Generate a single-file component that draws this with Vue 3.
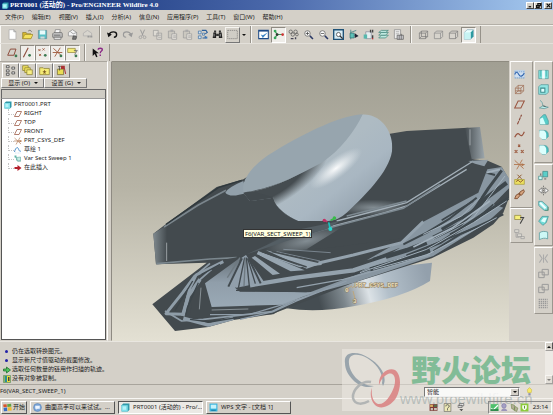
<script setup>
import { h, ref } from 'vue'

const cube = (s, f) =>
  `<path d="M2 6l3-3h9v8l-3 3H2z" fill="${f}" stroke="${s}"/><path d="M2 6h9v8M11 6l3-3" fill="none" stroke="${s}"/>`
const dot = (x, y) => `<circle cx="${x}" cy="${y}" r="2" fill="#3d7a52"/>`
const glass = (inner) =>
  `<circle cx="6.500" cy="6.500" r="4" fill="#fff" stroke="#555"/><path d="M10 10l4.500 4.500" stroke="#2c3a66" stroke-width="2.200"/>${inner}`

const icons = {
  new: '<path d="M3 1h7l3 3v11H3z" fill="#fff" stroke="#a9a9a9"/><path d="M10 1v3h3" fill="none" stroke="#888"/>',
  open: '<path d="M1 5h5l1 2h6v7H1z" fill="#d9b92e" stroke="#8a7a2a"/><path d="M1 14l3-6h12l-3 6z" fill="#f4e25e" stroke="#a08c2c"/><path d="M9 3c2-2 4-1 5 1" fill="none" stroke="#555"/>',
  save: '<path d="M2 2h12v12H2z" fill="#58bfc4" stroke="#5d8b94"/><path d="M4 2h8v6H4z" fill="#e8fbfb"/><path d="M5 11h6v3H5z" fill="#cfd9da"/>',
  print: '<path d="M4 6l1-5h7l-1 5" fill="#fff" stroke="#777"/><path d="M1 7l2-2h11l1 2v5H1z" fill="#bdbdbd" stroke="#666"/><path d="M3 12h10v3H3z" fill="#eee" stroke="#666"/><path d="M3 9h9" stroke="#555"/>',
  mail: '<path d="M2 5l6-4 6 4v5H2z" fill="#f4f4f4" stroke="#888"/><path d="M5 4l4 3 5-2" fill="none" stroke="#888"/><path d="M9 10l5 1-1 4H8z" fill="#777" stroke="#444"/>',
  link: '<path d="M2 6l6-4 6 4v4H2z" fill="#d8d5ce" stroke="#aaa"/><path d="M8 11h3m1 0h3" stroke="#999" stroke-width="2.500"/>',
  undo: '<path d="M3 8c2-5 11-5 11 0 0 3-2 4-4 4" fill="none" stroke="#111" stroke-width="2"/><path d="M0 5l2 7 5-4z" fill="#111"/>',
  redo: '<path d="M13 8C11 3 2 3 2 8c0 3 2 4 4 4" fill="none" stroke="#999" stroke-width="1.600"/><path d="M16 5l-2 7-5-4z" fill="#999"/>',
  cut: '<path d="M5 1l4 9M11 1L7 10" stroke="#999" stroke-width="1.400"/><g fill="none" stroke="#999"><circle cx="5" cy="12" r="2"/><circle cx="11" cy="12" r="2"/></g>',
  copy: '<path d="M2 2h7v8H2zM7 6h7v9H7z" fill="#dedbd4" stroke="#999"/><path d="M9 9h4M9 12h4" stroke="#999"/>',
  paste: '<path d="M2 3h9v10H2z" fill="#cbc8c0" stroke="#999"/><path d="M5 1h4v3H5z" fill="#aaa"/><path d="M7 7h7v8H7z" fill="#e4e1da" stroke="#999"/><path d="M9 10h4M9 12h4" stroke="#999"/>',
  regen: '<path d="M2 3h4v4H2zM2 10h4v4H2zM8 6h3v3H8z" fill="#cfe3f5" stroke="#3d6c9e"/><path d="M7 2h6l2 3-3 2M8 13h4v-3" fill="none" stroke="#2b5f9b" stroke-width="1.500"/><path d="M12 11h3v3h-3z" fill="#3d79b8"/>',
  find: '<path d="M2 5h4v8H1zM10 5h4l1 8h-5z" fill="#222"/><path d="M3 2h3v3H3zM10 2h3v3h-3zM6 7h4v3H6z" fill="#333"/><path d="M3 7v4M12 7v4" stroke="#ccc"/>',
  box: '<path d="M1 2h14v12H1z" fill="#d0cdc6" stroke="#777" stroke-dasharray="2 1"/>',
  repaint: '<path d="M1 2h14v12H1z" fill="#fff" stroke="#1d4a86" stroke-width="1.500"/><path d="M1 3h14" stroke="#1d4a86" stroke-width="1.500"/><path d="M4 8l3 5 7-8-7 4z" fill="#3e86c6"/>',
  spin: '<path d="M3 3l3 5-3 5M6 8h8" fill="none" stroke="#3aa05a" stroke-width="1.800"/><circle cx="3" cy="3" r="2" fill="#38a75b"/><circle cx="3" cy="13" r="2" fill="#38a75b"/><circle cx="6" cy="8" r="2" fill="#333"/><circle cx="14" cy="8" r="2" fill="#c33"/>',
  orient: '<g fill="none" stroke="#555"><circle cx="4" cy="4" r="2.500"/><circle cx="11" cy="4" r="2.500"/><circle cx="7" cy="8" r="2.500"/><circle cx="13" cy="8" r="2"/></g><path d="M4 13h4v2H4zM10 12h2v3h-2z" fill="#445"/>',
  zoomin: glass('<path d="M4 6.500h5M6.500 4v5" stroke="#333"/>'),
  zoomout: glass('<path d="M4 6.500h5" stroke="#333"/>'),
  refit: '<path d="M1 1h14v14H1z" fill="#d9eef6" stroke="#1f5277" stroke-width="2"/><circle cx="8" cy="8" r="3" fill="#fff" stroke="#333"/><path d="M10 10l4 4" stroke="#333" stroke-width="2"/>',
  reorient: '<path d="M4 1v14M4 8l11 2M4 5l8-3" stroke="#2b7b7b" fill="none"/><path d="M3 6h6v7H3z" fill="#5cc2b8" stroke="#2f6f70"/><path d="M10 6l5 4-5 3z" fill="#223"/>',
  views: '<path d="M4 4h8v10H4z" fill="#e5eef0" stroke="#889"/><path d="M1 8h5v6H1z" fill="#57b8ad"/><path d="M10 1h2v4h-2zM13 1h2v4h-2zM13 9h2v4h-2z" fill="#444"/><path d="M13 13h2v2h-2z" fill="#b33"/>',
  layers: '<g fill="#bfe8df" stroke="#3b8176"><path d="M1 13l4-4h10l-4 4z"/><path d="M1 9l4-4h10l-4 4z"/><path d="M1 5l4-3h10l-4 3z"/></g>',
  manager: '<path d="M2 1h9v13H2z" fill="#eee" stroke="#888"/><path d="M4 4h5M4 7h5" stroke="#999"/><path d="M6 9h9v6H6z" fill="#cfcfd4" stroke="#555"/><path d="M9 9v6M12 7v8" stroke="#555"/>',
  wire: cube('#777', 'none') + '<path d="M5 3v8h9M5 11l-3 3" fill="none" stroke="#777"/>',
  hidden: cube('#888', '#d6d3cc'),
  nohidden: cube('#777', '#d8d5ce'),
  shaded: '<path d="M2 5l4-4h9v10l-4 4H2z" fill="#e9ffff" stroke="#8ab"/><path d="M11 5l4-4v10l-4 4z" fill="#2d9aa0"/><path d="M2 5h9v10H2z" fill="#c7f3f3"/>',
  dplane: '<path d="M1 12L5 3h8l-3 9z" fill="none" stroke="#8b4a3a" stroke-width="1.400"/>' + dot(13, 13),
  daxis: '<path d="M2 15L9 1" stroke="#8b4a3a" stroke-width="1.600"/>' + dot(11, 12),
  dpoint: '<path d="M2 3l3 3m0-3L2 6M8 2l3 3m0-3L8 5M3 10l3 3m0-3l-3 3" stroke="#a0593d" stroke-width="1.300"/>' + dot(12, 12),
  dcsys: '<path d="M2 2l11 10M12 1L4 14M1 8h14" stroke="#a05a3c" stroke-width="1.300"/>' + dot(13, 13),
  dnote: '<path d="M1 2h11v6H1z" fill="#f5ec7a" stroke="#8d8236"/><path d="M10 5h5l-4 6" fill="none" stroke="#555"/>' + dot(13, 13),
  help: '<path d="M1 2v11l3-3 2 5 2-1-2-5h4z" fill="#111"/><path d="M9 4c0-3 6-3 6 0 0 2-3 2-3 5M12 11v2" fill="none" stroke="#8b2a86" stroke-width="2"/>',
  tree: '<g fill="#eee" stroke="#333"><path d="M2 1h4v3H2zM2 7h4v3H2zM2 12h4v3H2zM10 3h4v3h-4zM10 10h4v3h-4z"/></g>',
  folders: '<path d="M1 1h8v7H1z" fill="#f3e562" stroke="#85792c"/><path d="M4 4h8v7H4z" fill="#f3e562" stroke="#85792c"/><path d="M7 7h8v7H7z" fill="#f7ee84" stroke="#85792c"/>',
  favs: '<path d="M1 4h5l1 1h8v9H1z" fill="#f4ea76" stroke="#85792c"/><path d="M8 7l1 2h2l-2 2 1 2-2-1-2 1 1-2-2-2h2z" fill="#7d5c22"/>',
  conn: '<path d="M2 6h9v8H2z" fill="#e9dc55" stroke="#6b622b"/><path d="M8 2h4v3H8zM12 4l2 9" fill="#a33" stroke="#a33" stroke-width="1.500"/><path d="M3 2h4M5 2v6" stroke="#333"/>',
  part: '<path d="M1 4l3-3h11v11l-3 3H1z" fill="#2f98a8"/><path d="M1 4h11v11H1z" fill="#7fe0ea"/><path d="M3 6h6v6H3z" fill="#b4f3f8"/>',
  plane: '<path d="M1 13L6 3h9l-5 10z" fill="none" stroke="#9a5540" stroke-width="1.500"/>',
  csys: '<path d="M1 2l13 12M12 1L4 15M0 8h15" stroke="#b0764f" stroke-width="1.300"/><path d="M11 6l5 2-5 3z" fill="#b0764f"/>',
  sketch: '<path d="M1 12c1-6 5-11 7-8s2 8 6 6" fill="none" stroke="#3d86c6" stroke-width="1.800"/><path d="M2 14h11" stroke="#a8cbe6" stroke-dasharray="2 1"/>',
  sweep: '<path d="M2 3c4 0 2 8 5 9h7" fill="none" stroke="#3f9a8b" stroke-width="1.500"/><path d="M5 5l8-1v7l-6 1z" fill="#c5ece4" stroke="#4e9c93"/><path d="M1 1h4v4H1z" fill="#61b5a8"/>',
  insert: '<path d="M1 6h6V2l8 6-8 6v-4H1z" fill="#b3202c"/>',
  hatch: '<path d="M1 2h14v11H1z" fill="#cfdff0" stroke="#b2cbe4"/><path d="M1 8c2-5 4-4 6 0s5 3 8-2" fill="none" stroke="#2f63ad" stroke-width="1.600"/><path d="M1 4h14M1 13h14" stroke="#5f8fc8" stroke-dasharray="2 1"/>',
  wirebox: '<path d="M2 6l4-4h8v8l-4 4H2zM2 6h8v8M10 6l4-4M6 2v8h8M6 10l-4 4M2 10h8" fill="none" stroke="#9c6b50"/>',
  axis: '<path d="M5 15L11 1" stroke="#8b4a3a" stroke-width="1.600" stroke-dasharray="5 1"/>',
  curve: '<path d="M1 12c4-8 6-5 8-3s4 0 6-5" fill="none" stroke="#98543f" stroke-width="1.700"/>',
  points: '<path d="M6 1l3 3m0-3L6 4M1 9l4 4m0-4l-4 4M10 9l4 4m0-4l-4 4" stroke="#9c5a3e" stroke-width="1.600"/>',
  analysis: '<path d="M1 8h14v7H1z" fill="#ece061" stroke="#a39738"/><path d="M5 1l6 6m0-6L5 7M3 11l3-2 3 3 4-3" fill="none" stroke="#8f5a2d" stroke-width="1.400"/>',
  ref: '<path d="M1 14l2-5 5-3 1 3-4 5zM7 8l2-4 5-3 1 3-4 5z" fill="#d4a37e" stroke="#7d4c30" stroke-width="1.300"/>',
  anno: '<path d="M1 2h9v6H1z" fill="#f6ef7b" stroke="#8d8236"/><path d="M9 5h5l-5 9" fill="none" stroke="#444" stroke-width="1.500"/>',
  annos: '<path d="M1 1h6v4H1zM5 7h6v4H5zM10 11h5v3h-5z" fill="#dcd9d2" stroke="#999"/><path d="M3 5v7h5" fill="none" stroke="#999"/>',
  hole: '<path d="M1 2h14v12H1z" fill="#7fe0dc" stroke="#5d9c9e"/><path d="M6 2h4v12H6z" fill="#effdfd"/><path d="M4 2v9M12 2v9" stroke="#3aa3a3"/>',
  shell: '<path d="M1 4l3-3h11v11l-3 3H1z" fill="#92e5e2" stroke="#4f9294"/><path d="M4 6h6v6H4z" fill="#e3ffff" stroke="#3c8b8c" stroke-width="1.500"/>',
  rib: '<path d="M3 2c2 1 4 4 4 8l-5 3 7 1 6-2-7-2" fill="#b9efec" stroke="#5c8f91"/><path d="M7 10l4 1" stroke="#333"/>',
  draft: '<path d="M3 15V6l5-5h3l4 9v5z" fill="#57cdc9" stroke="#4a9698"/><path d="M3 7l4-2 4 10H3z" fill="#d6fffc"/>',
  round: '<path d="M2 2h7c4 0 6 3 6 6v3l-4 4H6z" fill="#45bcbc" stroke="#5aa1a3"/><path d="M2 2h6c3 1 4 4 4 6v7H6L2 11z" fill="#dcfffd"/>',
  mirrorbox: '<path d="M7 2h7v8H7z" fill="#5bcfc9" stroke="#3d8485"/><path d="M1 9h5v5H1z" fill="#d3fffb" stroke="#3d8485"/><path d="M4 5v3M9 13h3" stroke="#333"/>',
  mirror: '<path d="M8 1v14" stroke="#555" stroke-dasharray="2 1"/><path d="M6 4v8L1 8zM10 4v8l5-4z" fill="#fff" stroke="#555"/>',
  extrude: '<path d="M1 2h5l8 7v6H9L1 8z" fill="#8de4e2" stroke="#448d90"/><path d="M3 4l8 8" stroke="#eff" stroke-width="3"/><path d="M10 15h5v-5" fill="none" stroke="#486"/>',
  blend: '<path d="M1 9l5-7h9l-3 9-5 4z" fill="#6fdad6" stroke="#3e8f91"/><path d="M4 9l4-5h5l-3 7z" fill="#e2fffd"/>',
  bound: '<path d="M2 4c5-3 8-2 12-1v10c-4-2-8-1-12 1z" fill="#cdf8f5" stroke="#4b9294"/>',
  gtrim: '<path d="M2 2l4 6-4 6M14 2l-4 6 4 6M8 2v12" fill="none" stroke="#aaa" stroke-width="1.500"/>',
  gmerge: '<path d="M1 6h8v8H1zM6 2h9v8H6z" fill="none" stroke="#999" stroke-width="1.400"/>',
  gpattern: '<path d="M1 2h13M1 5h13M1 8h13M1 11h13M1 14h13" stroke="#999" stroke-width="2" stroke-dasharray="2 1"/>',
  win: '<g transform="rotate(-6 8 8)"><path d="M1 2h6v5H1z" fill="#d9532b"/><path d="M8 2h7v5H8z" fill="#63a33d"/><path d="M1 8h6v6H1z" fill="#3a6dc4"/><path d="M8 8h7v6H8z" fill="#eebb33"/></g>',
  chat: '<circle cx="8" cy="8" r="7" fill="#7ba6d9" stroke="#557eb3"/><path d="M4 5h8v5H8l-2 2v-2H4z" fill="#eef6ff"/>',
  wps: '<path d="M1 1h14v14H1z" fill="#38b4dc"/><path d="M3 3h10v7H3z" fill="#c6f2fb"/><path d="M4 13h8" stroke="#187fa8" stroke-width="2"/>',
  bulb: '<path d="M8 1l4 4-1 5H5L4 5z" fill="#f7ea66" stroke="#c9b845"/><path d="M6 11h4v4H6z" fill="#8f90a8"/>',
  ime: '<path d="M1 2h14v12H1z" fill="#7d3b36"/><path d="M2 3h5v4H2z" fill="#d8b060"/><path d="M9 3h5v4H9z" fill="#56734a"/><path d="M3 9h4v4H3zM9 9h5v4H9z" fill="#c8c1b5"/>',
  qmark: '<path d="M2 1h12v14H2z" fill="#eeeab7" stroke="#555"/><path d="M5 6c0-4 6-4 6 0 0 2-3 2-3 4M8 11v2" fill="none" stroke="#444" stroke-width="1.500"/>',
  restore: '<path d="M4 1h8v4H4zM2 4h7v4H2z" fill="#eee" stroke="#444"/><path d="M4 11h7l-3 3z" fill="#333"/>',
  usb: '<path d="M1 2h14v12H1z" fill="#4fc06c"/><path d="M2 10l4 2 8-8" fill="none" stroke="#fff" stroke-width="2"/><path d="M1 11h14v3H1z" fill="#278346"/>',
  user: '<circle cx="7" cy="5" r="4" fill="#a5a0c5" stroke="#7771a0"/><path d="M2 14c1-6 9-6 11 0z" fill="#9b95ba"/>',
  sound: '<path d="M2 2l6 2v8l-5-2zM9 6l5 3-2 6-5-2z" fill="#b3ad96" stroke="#6b8745"/>',
  shield: '<path d="M1 1h14v14H1z" fill="#8ccb3b"/><path d="M4 4h8v4c0 3-2 4-4 5-2-1-4-2-4-5z" fill="#fff"/><path d="M8 5v5" stroke="#5b9b27" stroke-width="2"/>',
  go: '<path d="M1 6h6V2l8 6-8 6v-4H1z" fill="#4fc35e" stroke="#1d6d2c" stroke-width="1.500"/>',
  door: '<path d="M1 1h14v14H1z" fill="#e8dc3a" stroke="#23705a"/><path d="M3 2h5v12H3z" fill="#2a8f95"/><path d="M10 4h3v8h-3z" fill="#444"/>'
}

const Icon = (props) =>
  h('svg', { viewBox: '0 0 16 16', class: 'ic', 'aria-hidden': 'true', innerHTML: icons[props.name] })
Icon.props = ['name']

const menus = ['文件(F)', '编辑(E)', '视图(V)', '插入(I)', '分析(A)', '信息(N)', '应用程序(P)', '工具(T)', '窗口(W)', '帮助(H)']

const topBars = [
  ['new', 'open', 'save', 'print', 'mail', 'link'],
  ['undo', 'redo', 'cut', 'copy', 'paste', 'paste', 'regen', 'find', 'box'],
  ['repaint', 'spin', 'orient', 'zoomin', 'zoomout', 'refit', 'reorient', 'views', 'layers', 'manager'],
  ['wire', 'hidden', 'nohidden', 'shaded']
]
const pressed = new Set(['spin', 'shaded', 'daxis', 'dpoint', 'dcsys', 'dnote'])
const datumBar = ['dplane', 'daxis', 'dpoint', 'dcsys', 'dnote']
const tabs = ['tree', 'folders', 'favs', 'conn']
const activeTab = ref('tree')

const features = [
  { icon: 'plane', label: 'RIGHT' },
  { icon: 'plane', label: 'TOP' },
  { icon: 'plane', label: 'FRONT' },
  { icon: 'csys', label: 'PRT_CSYS_DEF' },
  { icon: 'sketch', label: '草绘 1' },
  { icon: 'sweep', label: 'Var Sect Sweep 1' },
  { icon: 'insert', label: '在此插入' }
]

const datumTools = [
  ['hatch', 'wirebox', 'plane', 'axis', 'curve', 'points', 'csys', 'analysis', 'ref'],
  ['anno', 'annos']
]
const shapeTools = [
  ['hole', 'shell', 'rib', 'draft', 'round', 'round'],
  ['mirrorbox', 'mirror', 'extrude', 'blend', 'bound'],
  ['gtrim', 'gmerge', 'gmerge', 'gpattern']
]

const messages = [
  { text: '仍在选取转换图元。' },
  { text: '显示新尺寸值驱动的截面修改。' },
  { icon: 'go', text: '选取任何数量的链用作扫描的轨迹。' },
  { icon: 'door', text: '没有对象被复制。' }
]

const tasks = [
  { icon: 'chat', label: '曲面高手可以来试试。...' },
  { icon: 'part', label: 'PRT0001 (活动的) - Pro/...', active: true },
  { icon: 'wps', label: 'WPS 文字 - [文档 1]' }
]
const filter = ref('智能')
</script>

<template>
  <div class="app">
    <header class="title">
      <Icon name="part" />
      <h1>PRT0001 (活动的) - Pro/ENGINEER Wildfire 4.0</h1>
      <div class="winbtns">
        <button aria-label="最小化"><svg viewBox="0 0 8 8"><path d="M1 6h4" /></svg></button>
        <button aria-label="还原"><svg viewBox="0 0 8 8"><path d="M3 1h4v3H3zM1 4h4v3H1z" /></svg></button>
        <button class="close" aria-label="关闭"><svg viewBox="0 0 8 8"><path d="M1 1l6 6M7 1L1 7" /></svg></button>
      </div>
    </header>

    <nav class="menu">
      <button v-for="m in menus" :key="m">{{ m }}</button>
    </nav>

    <div class="bar">
      <div v-for="(group, g) in topBars" :key="g" class="group">
        <button v-for="(name, i) in group" :key="i" class="tool" :class="{ on: pressed.has(name), raised: name === 'box' }" :aria-label="name">
          <Icon :name="name" />
        </button>
        <span v-if="g === 1" class="caret"></span>
      </div>
    </div>
    <div class="bar second">
      <div class="group">
        <button v-for="name in datumBar" :key="name" class="tool" :class="{ on: pressed.has(name) }" :aria-label="name">
          <Icon :name="name" />
        </button>
      </div>
      <div class="group">
        <button class="tool" aria-label="help"><Icon name="help" /></button>
      </div>
    </div>

    <main class="main">
      <aside class="panel">
        <div class="tabs">
          <button v-for="t in tabs" :key="t" :class="{ active: t === activeTab }" :aria-label="t" @click="activeTab = t">
            <Icon :name="t" />
          </button>
        </div>
        <div class="dropdowns">
          <button>显示 (O)<span class="caret"></span></button>
          <button>设置 (G)<span class="caret"></span></button>
        </div>
        <div class="treehead"></div>
        <ul class="tree">
          <li class="root"><Icon name="part" />PRT0001.PRT</li>
          <li v-for="f in features" :key="f.label"><Icon :name="f.icon" />{{ f.label }}</li>
        </ul>
      </aside>
      <div class="sash"></div>

      <section class="canvas">
        <svg class="model" viewBox="112 61 397 279">
          <defs>
            <linearGradient id="rim" gradientUnits="userSpaceOnUse" x1="520" y1="200" x2="640" y2="350">
              <stop offset="0" stop-color="#aebbc3" />
              <stop offset=".5" stop-color="#a9b7c2" />
              <stop offset="1" stop-color="#95a3af" />
            </linearGradient>
            <radialGradient id="shade" gradientUnits="userSpaceOnUse" cx="0" cy="0" r="1" gradientTransform="translate(385 235) rotate(-30) scale(205 82)">
              <stop offset="0" stop-color="#454c50" />
              <stop offset=".62" stop-color="#454c50" />
              <stop offset="1" stop-color="#454c50" stop-opacity="0" />
            </radialGradient>
            <radialGradient id="glow" gradientUnits="userSpaceOnUse" cx="0" cy="0" r="1" gradientTransform="translate(588 202) rotate(-37) scale(95 30)">
              <stop offset="0" stop-color="#fff" stop-opacity=".95" />
              <stop offset=".45" stop-color="#eef2f4" stop-opacity=".6" />
              <stop offset="1" stop-color="#dfe6ea" stop-opacity="0" />
            </radialGradient>
            <linearGradient id="foot" gradientUnits="userSpaceOnUse" x1="540" y1="610" x2="860" y2="520">
              <stop offset="0" stop-color="#454d52" />
              <stop offset=".22" stop-color="#7d878d" />
              <stop offset=".45" stop-color="#dce2e6" />
              <stop offset=".62" stop-color="#b3c0ca" />
              <stop offset="1" stop-color="#93a0ac" />
            </linearGradient>
            <linearGradient id="tipR">
              <stop offset="0" stop-color="#454c50" />
              <stop offset="1" stop-color="#9ca6ac" />
            </linearGradient>
            <linearGradient id="tipL">
              <stop offset="0" stop-color="#7f898e" />
              <stop offset="1" stop-color="#454c50" />
            </linearGradient>
            <linearGradient id="fan" x1="0" y1="0" x2="0" y2="1">
              <stop offset="0" stop-color="#667178" />
              <stop offset=".5" stop-color="#909eaa" />
              <stop offset="1" stop-color="#9aa9b5" />
            </linearGradient>
            <radialGradient id="mist">
              <stop offset="0" stop-color="#838d93" />
              <stop offset="1" stop-color="#838d93" stop-opacity="0" />
            </radialGradient>
            <clipPath id="disc">
              <path d="M310 275C400 270 580 190 668 40 720 40 757 85 757 140 755 200 690 270 620 335Q595 358 565 360L475 360C440 345 405 320 400 290L330 300z" />
            </clipPath>
          </defs>

          <g transform="translate(140 100) scale(.33333)">
            <path fill="url(#foot)" d="M440 622Q530 636 640 616 790 590 870 540L876 485 700 505 500 590z" />
            <path fill="#434a4e" d="M40 398L70 375 230 258 310 235 400 180 750 98 800 90 985 80 1000 175 1045 180 1085 197 1107 235V290L1090 335 1060 370 1000 410 875 472 640 545 395 640 280 657 205 678 105 690 37 610 200 485 48 490z" />

            <path fill="url(#tipL)" d="M40 398L80 372V488L48 490z" />
            <path fill="url(#tipR)" d="M975 81L1020 78 1034 172 995 175z" />
            <path d="M80 425v55M990 85v48" stroke="#c6cbce" stroke-width="2" />
            <path fill="none" stroke="#7b868d" stroke-width="5" d="M72 378L175 312 258 268" />
            <path fill="none" stroke="#30393d" stroke-width="4" d="M78 370L235 260 305 238" />
            <path fill="#92a0aa" d="M256 275Q262 260 310 240L320 275Q270 292 256 275z" />
            <path fill="none" stroke="#7b878e" stroke-width="5" d="M50 488L210 474 290 470" />

            <ellipse cx="700" cy="320" rx="110" ry="24" fill="url(#mist)" />
            <ellipse cx="500" cy="420" rx="130" ry="38" fill="url(#mist)" transform="rotate(-12 500 420)" />
            <path fill="#434a4e" d="M500 445L620 370 780 325 1000 185 1040 190 1055 245 880 340 780 420 600 465z" />
            <path fill="none" stroke="#a3afb8" stroke-width="4" d="M590 360L800 305 1000 180M560 380L735 335 800 315 980 205" />
            <path fill="none" stroke="#7d8991" stroke-width="5" d="M480 405L600 372 790 322 900 250M620 345L800 300" />
            <path fill="#8f9ca6" d="M985 180l60-4-12 20-28-8z" />
            <path fill="#545e64" d="M320 460L480 385 600 360 560 385 440 420z" />

            <path fill="#8896a1" d="M1042 205L1085 198 1107 232V262L1060 310 1090 320 1040 365 880 465 640 545 440 600 640 525 780 440 690 475 560 500 790 420 850 362 1015 275z" />
            <g fill="none" stroke="#3e474c" stroke-linejoin="round">
              <path stroke-width="13" d="M1100 245L1040 290 960 370 880 410" />
              <path stroke-width="9" d="M1085 208L1045 262 1000 330 905 385M1105 292L1020 345 900 425 800 465" />
              <path stroke-width="6" d="M1010 290L930 352 860 395 790 430M1065 222L1040 215M1090 340L960 400 880 450" />
              <path stroke-width="14" d="M700 478L800 448 860 425M690 505L780 480 870 448" />
              <path stroke-width="5" d="M1020 375L905 420 780 475 640 522M1060 310L1000 362 930 400M1000 300L905 358" />
            </g>
            <g fill="none" stroke="#a3b1bc" stroke-linejoin="round">
              <path stroke-width="3" d="M1095 225L1050 285 1000 350 880 415M1020 290L965 345 850 400M1100 300L1000 365 860 445 660 515M1070 350L940 420 860 462 700 505" />
              <path stroke-width="5" d="M1040 215L1080 205M1050 300L935 382 820 438" />
            </g>

            <path fill="#434a4e" d="M330 460L570 440 800 410 640 500 380 545z" />
            <g fill="none" stroke="#94a2ad" stroke-linejoin="round">
              <path stroke-width="9" d="M500 494L640 462 785 425 850 362" />
              <path stroke-width="13" d="M330 553L470 530 640 508 740 475" />
              <path stroke-width="4" d="M470 560L610 535 740 500 870 462M360 455L480 497 545 490" />
              <path stroke-width="2" d="M430 445L572 455M410 452L540 480" />
            </g>
            <path fill="#97a5b0" d="M345 465L420 518 398 522 335 470zM355 450L494 508 452 511 350 460zM378 448L548 487 500 503z" />
            <path fill="none" stroke="#434a4e" stroke-width="4" d="M365 452L500 498M352 462L440 512M395 452L535 484" />

            <path fill="#434a4e" d="M205 485L310 465 270 570 500 580 400 640 205 650 150 650 160 560z" />
            <path fill="url(#fan)" d="M195 547L300 470 285 560 300 572 520 574 430 611 215 618z" />
            <path fill="#919fab" d="M318 462L375 547 345 549 290 560 262 555 305 470z" />
            <g fill="none" stroke="#424a4f">
              <path stroke-width="6" d="M306 472L265 557M326 472L362 547" />
              <path stroke-width="4" d="M314 470L295 562M319 470L328 556M323 472L346 548M288 568L500 572" />
            </g>
            <path fill="none" stroke="#6f7a81" stroke-width="4" d="M300 470L262 530M316 470L312 556" />

            <g fill="none" stroke="#8f9da8" stroke-linejoin="round">
              <path stroke-width="9" d="M165 525L128 575 78 638 130 640 150 560 168 522 250 482" />
              <path stroke-width="11" d="M180 535L145 585 128 645M130 652L205 672 280 652" />
              <path stroke-width="5" d="M210 487L165 525M75 630L125 660 190 655 395 632 460 600M215 505L175 540" />
            </g>
            <g fill="none" stroke="#3c454a" stroke-width="4">
              <path d="M158 540L105 628M175 545L142 620 138 640M185 520L240 490M150 655L210 663 290 650" />
            </g>
            <path d="M183 560l-5 65M215 627l110-3" stroke="#a9b3b9" stroke-width="2" />
            <path fill="none" stroke="#909eaa" stroke-width="4" d="M210 641L330 640 430 610 530 575M300 655L400 632 470 600 620 540" />

            <g clip-path="url(#disc)">
              <path fill="url(#rim)" d="M300 30h470v340H300z" />
              <path fill="url(#shade)" d="M300 30h470v340H300z" />
              <path fill="url(#glow)" d="M300 30h470v340H300z" />
              <path fill="#434a4e" d="M300 260L398 288Q404 325 475 362L300 370z" />
            </g>
            <path fill="#97a5ae" d="M311 274C300 235 345 185 400 153 470 110 590 45 668 40 645 90 600 150 545 185 470 225 400 262 311 274z" />

            <g fill="none" stroke-width="5">
              <path stroke="#c13366" d="M550 356l12 6" />
              <path stroke="#38bb49" d="M572 358l16-8" />
              <path stroke="#18c4bf" d="M566 364l5 20" />
            </g>
            <circle cx="571" cy="384" r="6" fill="#24d6ce" />
            <circle cx="553" cy="358" r="5" fill="#c13366" />
            <circle cx="583" cy="351" r="5" fill="#38bb49" />
          </g>

          <g class="csys">
            <path d="M347 288l5-3M353 290l2 8M352 287l5-4" />
            <text x="345" y="291">0</text>
            <text x="353" y="302">3</text>
            <text x="355" y="286">PRT_CSYS_DEF</text>
          </g>
          <g class="tip">
            <rect x="243.500" y="228.500" width="68" height="8" />
            <text x="245" y="235">F6(VAR_SECT_SWEEP_1)</text>
          </g>
        </svg>
      </section>

      <div class="side">
        <div v-for="(g, i) in datumTools" :key="i" class="stack">
          <button v-for="(n, j) in g" :key="j" class="tool" :aria-label="n"><Icon :name="n" /></button>
        </div>
      </div>
      <div class="side narrow">
        <div v-for="(g, i) in shapeTools" :key="i" class="stack">
          <button v-for="(n, j) in g" :key="j" class="tool" :aria-label="n"><Icon :name="n" /></button>
        </div>
      </div>
    </main>

    <footer class="foot">
      <div class="messages">
        <ul>
          <li v-for="m in messages" :key="m.text">
            <Icon v-if="m.icon" :name="m.icon" /><span v-else class="bullet"></span>{{ m.text }}
          </li>
        </ul>
        <div class="scroll">
          <button aria-label="向上"><span class="caret up"></span></button>
          <button aria-label="向下"><span class="caret"></span></button>
        </div>
      </div>

      <div class="status">
        <span class="hint">F6(VAR_SECT_SWEEP_1)</span>
        <div class="filter">
          <select v-model="filter" aria-label="过滤器"><option>智能</option></select>
          <span class="arrow"><span class="caret"></span></span>
        </div>
        <Icon name="bulb" />
      </div>

      <div class="taskbar">
        <button class="start"><Icon name="win" />开始</button>
        <button v-for="t in tasks" :key="t.label" class="task" :class="{ active: t.active }">
          <Icon :name="t.icon" /><span>{{ t.label }}</span>
        </button>
        <div class="lang"><Icon name="ime" /><Icon name="qmark" /><Icon name="restore" /></div>
        <div class="tray">
          <Icon name="usb" /><Icon name="user" /><Icon name="sound" /><Icon name="shield" />
          <time>23:14</time>
        </div>
      </div>

      <div class="mark">
        <svg viewBox="342 348 64 62" aria-hidden="true">
          <path fill="#8d9ba5" fill-rule="evenodd" d="M345 362C343 349 359 350 369 357 381 364 388 376 383 385L382 382C384 373 376 362 367 357 358 352 350 353 349 359 348 367 353 376 361 381 366 384 370 385 374 385 366 388 358 384 353 379 348 374 345 368 345 362z" />
          <path fill="#da7f80" fill-rule="evenodd" d="M379 384C378 373 388 366 395 369 402 374 401 388 396 397 390 406 380 409 375 404 370 399 370 391 372 387 371 395 373 401 378 403 385 404 391 394 394 386 397 376 393 371 388 373 384 375 381 378 379 384z" />
          <path fill="none" stroke="#a9adae" stroke-width="2.500" d="M371 381C362 379 352 389 353 397 355 405 364 403 369 400" />
        </svg>
        <div class="words"><strong>野火论坛</strong><em>www.proewildfire.cn</em></div>
      </div>
    </footer>
  </div>
</template>

<style>
html, body, #app { height: 100%; }
body { margin: 0; overflow: hidden; background: #d4d0c8; }
</style>

<style scoped>
* { box-sizing: border-box; }
.app {
  min-height: 100%;
  display: flex;
  flex-direction: column;
  background: #d4d0c8;
  color: #222;
  font: 6px/9px "Noto Sans", "Noto Sans CJK SC", sans-serif;
}
button, select { font: inherit; color: inherit; margin: 0; padding: 0; border: 0; background: none; border-radius: 0; }
ul { list-style: none; margin: 0; padding: 0; }
.ic { width: 11px; height: 11px; flex: none; display: block; }
.caret { width: 0; height: 0; border: 2px solid transparent; border-top-color: #111; border-bottom: 0; flex: none; }
.caret.up { border-top: 0; border-bottom: 2px solid #111; }

.title { height: 10px; display: flex; align-items: center; padding: 0 1px 0 2px; background: linear-gradient(90deg, #0c2a72, #4b69ab 50%, #a6caf0); color: #fff; }
.title .ic { width: 7px; height: 7px; }
.title h1 { flex: 1; margin: 0 0 0 1px; font: bold 7px/10px "Liberation Serif", "Noto Sans CJK SC", serif; white-space: nowrap; }
.winbtns { display: flex; }
.winbtns button { width: 8px; height: 7px; display: grid; place-items: center; background: #d4d0c8; border: 1px solid; border-color: #fff #444 #444 #fff; }
.winbtns .close { margin-left: 2px; }
.winbtns svg { width: 5px; height: 5px; fill: none; stroke: #111; stroke-width: 2; }

.menu { height: 15px; display: flex; align-items: center; gap: 8px; padding: 0 5px; border-bottom: 1px solid #b3afa7; }
.bar { height: 18px; display: flex; border-top: 1px solid #f3f1ec; }
.second { border-top-color: #e3e0da; }
.group { display: flex; align-items: center; padding: 0 4px; border-right: 1px solid #96928a; border-left: 1px solid #f8f7f4; }
.tool { width: 15px; height: 16px; display: grid; place-items: center; flex: none; }
.tool.on { background: #efede9; border: 1px solid; border-color: #8f8b83 #fff #fff #8f8b83; }
.tool.raised { border: 1px solid; border-color: #f5f3ef #777 #777 #f5f3ef; }
.group .caret { margin: 0 0 0 2px; }

.main { flex: 1; min-height: 0; display: flex; }
.panel { width: 107px; flex: none; display: flex; flex-direction: column; padding: 1px; border-top: 1px solid #aaa69e; }
.tabs { display: flex; height: 15px; padding-left: 1px; }
.tabs button { width: 17px; display: grid; place-items: center; border: 1px solid; border-color: #fff #777 #a5a199 #fff; }
.tabs .active { border-bottom-color: transparent; }
.dropdowns { display: flex; height: 10px; }
.dropdowns button { width: 43px; display: flex; align-items: center; justify-content: flex-end; gap: 4px; padding-right: 5px; border: 1px solid; border-color: #fff #777 #777 #fff; white-space: nowrap; }
.treehead { height: 10px; margin-top: 1px; border: 1px solid #666; border-bottom-color: #999; background: #cfccc4; }
.tree { flex: 1; background: #fff; border: 1px solid #555; border-top: 0; padding: 1px 2px; }
.tree li { height: 9px; display: flex; align-items: center; gap: 2px; padding-left: 10px; white-space: nowrap; position: relative; }
.tree li.root { padding-left: 0; }
.tree .ic { width: 8px; height: 8px; }
.tree li:not(.root)::before { content: ""; position: absolute; left: 4px; top: 0; width: 5px; height: 5px; border: dotted #c4c4c4; border-width: 0 0 1px 1px; }
.sash { width: 5px; flex: none; border: 1px solid; border-color: transparent #8e8a82 transparent #fff; }

.canvas { flex: 1; min-width: 0; min-height: 0; background: linear-gradient(#a19f93, #b7b4a6 45%, #e3e0d3); display: flex; border-top: 1px solid #8e8b80; }
.model { width: 100%; height: 100%; display: block; }
.csys path { fill: none; stroke: #bda67c; }
.csys text { font: bold 6px "Liberation Mono", monospace; fill: #e9dfc0; stroke: #8d7b57; stroke-width: 1px; paint-order: stroke; }
.tip rect { fill: #ffffe1; stroke: #333; }
.tip text { font: 6px "Noto Sans", sans-serif; fill: #111; }

.side { width: 23px; flex: none; margin-left: 1px; }
.side.narrow { width: 19px; }
.stack { display: flex; flex-direction: column; align-items: center; padding: 5px 4px 5px 0; border: 1px solid; border-color: #fff #9a968e #9a968e #f5f3ef; }
.stack + .stack { padding: 3px 4px 0 0; }
.narrow .stack { padding-right: 0; }
.side .tool { height: 15px; }
.narrow .stack + .stack { padding: 3px 0 2px; margin-top: 1px; }

.foot { position: relative; flex: none; }
.messages { height: 44px; display: flex; border-top: 1px solid #e9e6e0; border-bottom: 1px solid #a8a49c; }
.messages ul { flex: 1; padding: 5px 0 0 3px; }
.messages li { height: 9px; display: flex; align-items: center; gap: 1px; }
.messages .ic { width: 8px; height: 8px; }
.bullet { width: 3px; height: 3px; margin: 0 3px 0 2px; border-radius: 50%; background: #2222a8; }
.scroll { width: 8px; display: flex; flex-direction: column; justify-content: space-between; background: #ebe9e4; }
.scroll button { height: 9px; display: grid; place-items: center; background: #d4d0c8; border: 1px solid; border-color: #fff #555 #555 #fff; }
.status { height: 14px; display: flex; align-items: center; padding-right: 19px; border-bottom: 1px solid #f8f7f4; }
.hint { flex: 1; }
.filter { width: 96px; height: 10px; display: grid; grid-template-columns: 1fr 9px; margin-right: 5px; background: rgba(255, 255, 255, 0.8); border: 1px solid; border-color: #777 #eee #eee #777; position: relative; z-index: 1; }
.filter select { grid-area: 1 / 1 / 2 / 3; appearance: none; padding-left: 2px; line-height: 8px; }
.arrow { grid-area: 1 / 2; display: grid; place-items: center; background: #d4d0c8; border: 1px solid; border-color: #fff #777 #777 #fff; pointer-events: none; }
.status .ic { width: 9px; height: 9px; position: relative; z-index: 1; }
.taskbar { height: 17px; display: flex; align-items: center; gap: 3px; padding: 2px 1px; }
.taskbar .ic { width: 9px; height: 9px; }
.start, .task { height: 13px; display: flex; align-items: center; gap: 2px; border: 1px solid; border-color: #fff #555 #555 #fff; padding: 0 2px; white-space: nowrap; }
.start { width: 26px; gap: 1px; padding: 0 1px; }
.task { width: 85px; gap: 3px; overflow: hidden; }
.task.active { background: #ebe9e5; border-color: #555 #fff #fff #555; }
.lang { margin-left: auto; display: flex; gap: 5px; padding-right: 19px; position: relative; z-index: 1; }
.tray { display: flex; align-items: center; gap: 1px; height: 13px; padding: 0 3px 0 1px; border: 1px solid; border-color: #888 #fff #fff #888; position: relative; z-index: 1; }
.tray time { padding-left: 3px; }

.mark { position: absolute; right: 0; bottom: 5px; width: 211px; height: 62px; display: flex; background: rgba(240, 236, 230, 0.5); pointer-events: none; }
.mark svg { width: 64px; height: 62px; flex: none; opacity: 0.85; }
.words { display: flex; flex-direction: column; }
.words strong { font: 900 30px/38px "Noto Sans CJK SC", sans-serif; color: #82bc97; padding-left: 5px; white-space: nowrap; }
.words em { font: normal 15px/20px "Liberation Sans", sans-serif; color: rgba(150, 165, 165, 0.6); margin-left: -6px; padding-top: 2px; white-space: nowrap; }
</style>
